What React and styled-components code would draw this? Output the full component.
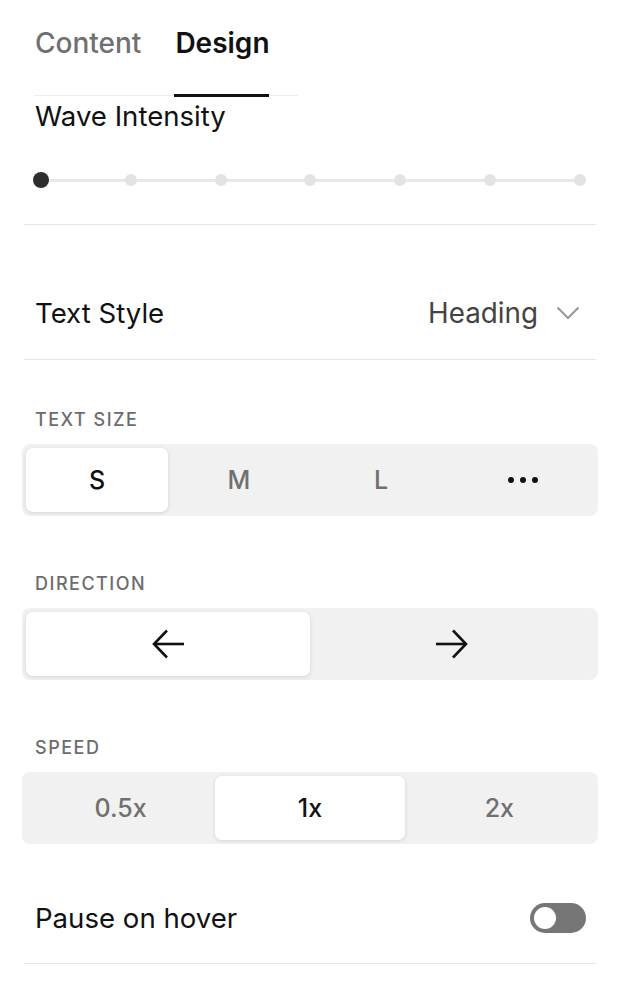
import { useState } from 'react';
import styled, { createGlobalStyle } from 'styled-components';

const GlobalStyle = createGlobalStyle`
    body {
        margin: 0;
        background: #fff;
        font-family: Inter, 'Liberation Sans', Arial, sans-serif;
        color: #111;
    }
`;

const Panel = styled.div`
    width: 572px;
    padding: 0 0 22px 24px;
`;

// 上方分頁
const TabList = styled.div`
    display: flex;
    gap: 33px;
    width: 264px;
    margin-left: 10px;
    padding-top: 27px;
    border-bottom: 1px solid #ececec;
`;

const Tab = styled.button`
    position: relative;
    border: 0;
    background: none;
    padding: 0 0 36px 1px;
    font: inherit;
    font-size: 28px;
    line-height: 32px;
    font-weight: ${(props) => (props.active ? 600 : 500)};
    color: ${(props) => (props.active ? '#111' : '#707070')};
    cursor: pointer;
    &::after {
        content: '';
        position: absolute;
        left: 0;
        right: 1px;
        bottom: -2px;
        height: 3px;
        background: ${(props) => (props.active ? '#111' : 'transparent')};
    }
`;

const Section = styled.div`
    padding: ${(props) => props.pad || '0'};
    border-bottom: ${(props) => (props.divider ? '1px solid #e6e6e6' : '0')};
`;

const Title = styled.div`
    padding: 0 10px 0 11px;
    font-size: 27.6px;
    line-height: 32px;
    color: #111;
`;

// 波浪強度滑桿
const Steps = styled.div`
    position: relative;
    display: flex;
    justify-content: space-between;
    align-items: center;
    margin: 0 10px 0 11px;
    height: 20px;
    &::before {
        content: '';
        position: absolute;
        left: 6px;
        right: 6px;
        top: 9px;
        height: 3px;
        background: #e8e8e8;
    }
`;

const Step = styled.span`
    position: relative;
    width: ${(props) => (props.active ? '16px' : '12px')};
    height: ${(props) => (props.active ? '16px' : '12px')};
    margin: ${(props) => (props.active ? '0 -2px 0 -2px' : '0')};
    border-radius: 50%;
    background: ${(props) => (props.active ? '#2e2e2e' : '#e3e3e3')};
`;

const Row = styled.div`
    display: flex;
    align-items: center;
    justify-content: space-between;
    padding: 0 ${(props) => props.right || '10px'} 0 11px;
`;

const RowLabel = styled.span`
    font-size: 27.6px;
    line-height: 32px;
    color: #111;
`;

const Select = styled.div`
    display: flex;
    align-items: center;
    gap: 18px;
    font-size: 27.8px;
    line-height: 32px;
    color: #444;
`;

const Label = styled.div`
    padding: 0 11px;
    font-size: 18px;
    line-height: 20px;
    font-weight: 500;
    letter-spacing: 1.5px;
    color: #6c6c6c;
    text-transform: uppercase;
`;

// 分段切換按鈕
const Segmented = styled.div`
    display: grid;
    grid-template-columns: repeat(${(props) => props.count}, 1fr);
    margin: 14px -2px 0;
    padding: 4px;
    height: 64px;
    border-radius: 8px;
    background: #f1f1f1;
`;

const Segment = styled.button`
    display: flex;
    align-items: center;
    justify-content: center;
    border: 0;
    border-radius: 7px;
    font: inherit;
    font-size: 25px;
    font-weight: 500;
    color: ${(props) => (props.active ? '#111' : '#707070')};
    background: ${(props) => (props.active ? '#fff' : 'transparent')};
    box-shadow: ${(props) => (props.active ? '0 1px 4px rgba(0, 0, 0, 0.12)' : 'none')};
    cursor: pointer;
`;

const Dots = styled.span`
    display: flex;
    gap: 6px;
    & > i {
        width: 6px;
        height: 6px;
        border-radius: 50%;
        background: #111;
    }
`;

const Toggle = styled.button`
    display: flex;
    align-items: center;
    width: 56px;
    height: 30px;
    padding: 0 4px;
    border: 0;
    border-radius: 15px;
    background: #767676;
    cursor: pointer;
    & > span {
        width: 22px;
        height: 22px;
        border-radius: 50%;
        background: #fff;
        margin-left: ${(props) => (props.on ? '26px' : '0')};
    }
`;

const Chevron = () => (
    <svg width='24' height='14' viewBox='0 0 24 14' fill='none'>
        <polyline points='1.5,1.5 12,12 22.5,1.5' stroke='#9a9a9a' strokeWidth='2.2' />
    </svg>
);

const Arrow = ({ dir }) => (
    <svg width='34' height='32' viewBox='0 0 34 32' fill='none' style={{ transform: dir === 'right' ? 'scaleX(-1)' : 'none' }}>
        <line x1='3' y1='16' x2='33' y2='16' stroke='#111' strokeWidth='2.6' />
        <polyline points='16,2.5 3,16 16,29.5' stroke='#111' strokeWidth='2.6' />
    </svg>
);

const App = () => {
    const [tab, setTab] = useState('design');
    const [intensity, setIntensity] = useState(0);
    const [size, setSize] = useState('S');
    const [direction, setDirection] = useState('left');
    const [speed, setSpeed] = useState('1x');
    const [pause, setPause] = useState(false);

    return (
        <Panel>
            <GlobalStyle />
            <TabList>
                <Tab active={tab === 'content'} onClick={() => setTab('content')}>
                    Content
                </Tab>
                <Tab active={tab === 'design'} onClick={() => setTab('design')}>
                    Design
                </Tab>
            </TabList>

            <Section divider pad='4px 0 34px'>
                <Title>Wave Intensity</Title>
                <Section pad='38px 0 0'>
                    <Steps>
                        {[0, 1, 2, 3, 4, 5, 6].map((i) => (
                            <Step key={i} active={i === intensity} onClick={() => setIntensity(i)} />
                        ))}
                    </Steps>
                </Section>
            </Section>

            <Section divider pad='72px 0 30px'>
                <Row right='16px'>
                    <RowLabel>Text Style</RowLabel>
                    <Select>
                        Heading
                        <Chevron />
                    </Select>
                </Row>
            </Section>

            <Section pad='50px 0 0'>
                <Label>Text Size</Label>
                <Segmented count={4}>
                    {['S', 'M', 'L'].map((item) => (
                        <Segment key={item} active={size === item} onClick={() => setSize(item)}>
                            {item}
                        </Segment>
                    ))}
                    <Segment active={size === 'more'} onClick={() => setSize('more')}>
                        <Dots>
                            <i />
                            <i />
                            <i />
                        </Dots>
                    </Segment>
                </Segmented>
            </Section>

            <Section pad='58px 0 0'>
                <Label>Direction</Label>
                <Segmented count={2}>
                    <Segment active={direction === 'left'} onClick={() => setDirection('left')}>
                        <Arrow dir='left' />
                    </Segment>
                    <Segment active={direction === 'right'} onClick={() => setDirection('right')}>
                        <Arrow dir='right' />
                    </Segment>
                </Segmented>
            </Section>

            <Section pad='58px 0 0'>
                <Label>Speed</Label>
                <Segmented count={3}>
                    {['0.5x', '1x', '2x'].map((item) => (
                        <Segment key={item} active={speed === item} onClick={() => setSpeed(item)}>
                            {item}
                        </Segment>
                    ))}
                </Segmented>
            </Section>

            <Section divider pad='58px 0 29px'>
                <Row>
                    <RowLabel>Pause on hover</RowLabel>
                    <Toggle on={pause} onClick={() => setPause(!pause)}>
                        <span />
                    </Toggle>
                </Row>
            </Section>
        </Panel>
    );
};

export default App;
